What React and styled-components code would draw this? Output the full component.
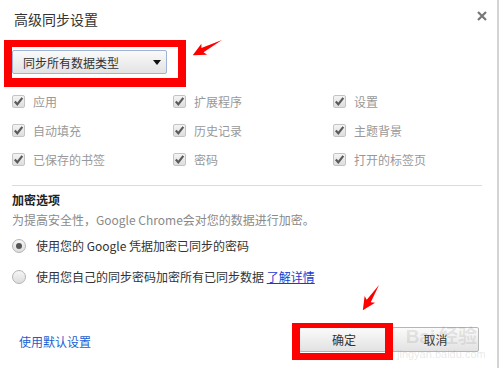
import React from "react";
import styled, { createGlobalStyle } from "styled-components";

const GlobalStyle = createGlobalStyle`
  html, body {
    margin: 0;
    padding: 0;
    background: #fff;
  }
  body {
    font-family: "Noto Sans CJK SC", "Noto Sans", "Liberation Sans", sans-serif;
    font-size: 12px;
    color: #333;
  }
`;

const syncItems = [
  ["应用", "扩展程序", "设置"],
  ["自动填充", "历史记录", "主题背景"],
  ["已保存的书签", "密码", "打开的标签页"],
];

const Dialog = () => (
  <Frame>
    <Header>
      <Title>高级同步设置</Title>
      <CloseButton aria-label="关闭">
        <svg width="10" height="10" viewBox="0 0 10 10">
          <path d="M1 1 L9 9 M9 1 L1 9" stroke="#777" strokeWidth="2.2" />
        </svg>
      </CloseButton>
    </Header>

    <Highlight>
      <Select>
        <span>同步所有数据类型</span>
        <Caret />
      </Select>
    </Highlight>

    <CheckGrid>
      {syncItems.flat().map((label) => (
        <CheckItem key={label}>
          <CheckBox>
            <svg width="11" height="11" viewBox="0 0 11 11">
              <path
                d="M1.8 5.6 L4.3 8.3 L9.3 1.8"
                fill="none"
                stroke="#5a5a5a"
                strokeWidth="2.2"
              />
            </svg>
          </CheckBox>
          <CheckLabel>{label}</CheckLabel>
        </CheckItem>
      ))}
    </CheckGrid>

    <Divider />

    <SectionTitle>加密选项</SectionTitle>
    <Description>
      为提高安全性，Google Chrome会对您的数据进行加密。
    </Description>

    <RadioRow>
      <Radio $checked />
      <span>使用您的 Google 凭据加密已同步的密码</span>
    </RadioRow>
    <RadioRow>
      <Radio />
      <span>
        使用您自己的同步密码加密所有已同步数据 <Link href="#">了解详情</Link>
      </span>
    </RadioRow>

    <Footer>
      <DefaultLink href="#">使用默认设置</DefaultLink>
      <Buttons>
        <Button $width={90}>确定</Button>
        <Button $width={87}>取消</Button>
      </Buttons>
    </Footer>

    <Watermark>
      <WatermarkLogo>Bai&#x2009;经验</WatermarkLogo>
      <WatermarkUrl>jingyan.baidu.com</WatermarkUrl>
    </Watermark>

    <ButtonHighlight />

    <Annotations width="499" height="368" viewBox="0 0 499 368">
      <Arrow x={222} y={40} length={33} angle={152.6} />
      <Arrow x={379} y={285} length={30} angle={122.6} />
    </Annotations>
  </Frame>
);

const Arrow = ({ x, y, length, angle }) => {
  const L = length;
  const points = `0,0 ${L - 11},-2.4 ${L - 13},-6.2 ${L},0 ${L - 13},6.2 ${L - 11},2.4`;
  return (
    <polygon
      points={points}
      fill="#ff0000"
      transform={`translate(${x} ${y}) rotate(${angle})`}
    />
  );
};

export default function App() {
  return (
    <>
      <GlobalStyle />
      <Dialog />
    </>
  );
}

const Frame = styled.div`
  position: relative;
  width: 497px;
  height: 368px;
  border-right: 2px solid #d4d4d4;
  display: flex;
  flex-direction: column;
  overflow: hidden;
`;

const Header = styled.div`
  display: flex;
  justify-content: space-between;
  align-items: center;
  padding: 10px 10px 0 14px;
  height: 18px;
`;

const Title = styled.div`
  font-size: 14px;
  line-height: 18px;
  color: #333;
`;

const CloseButton = styled.div`
  display: flex;
  align-items: center;
  margin-top: -6px;
`;

const Highlight = styled.div`
  align-self: flex-start;
  margin: 12px 0 0 4px;
  border: solid #ff0000;
  border-width: 7px 8px 9px 8px;
  padding: 3px 11px 4px 0;
`;

const Select = styled.div`
  box-sizing: border-box;
  width: 155px;
  height: 24px;
  display: flex;
  align-items: center;
  justify-content: space-between;
  padding: 0 5px 0 10px;
  border: 1px solid #9fb3d6;
  border-radius: 2px;
  background: linear-gradient(#fafafa, #e3e3e3);
  color: #333;
  font-size: 12px;
`;

const Caret = styled.span`
  width: 0;
  height: 0;
  border-left: 4px solid transparent;
  border-right: 4px solid transparent;
  border-top: 5px solid #111;
`;

const CheckGrid = styled.div`
  display: grid;
  grid-template-columns: 161px 160px 1fr;
  grid-auto-rows: 29px;
  padding-left: 12px;
`;

const CheckItem = styled.div`
  display: flex;
  align-items: center;
  gap: 8px;
`;

const CheckBox = styled.span`
  box-sizing: border-box;
  width: 13px;
  height: 13px;
  display: flex;
  align-items: center;
  justify-content: center;
  border: 1px solid #c4c4c4;
  border-radius: 2px;
  background: linear-gradient(#f4f4f4, #dedede);
`;

const CheckLabel = styled.span`
  color: #999;
  font-size: 12px;
  line-height: 16px;
`;

const Divider = styled.div`
  height: 1px;
  background: #dcdcdc;
  margin: 11px 15px 0 12px;
`;

const SectionTitle = styled.div`
  margin: 4px 0 0 12px;
  font-size: 12px;
  font-weight: bold;
  line-height: 20px;
  color: #222;
`;

const Description = styled.div`
  margin-left: 12px;
  line-height: 20px;
  color: #8a8a8a;
`;

const RadioRow = styled.div`
  display: flex;
  align-items: center;
  gap: 10px;
  height: 31px;
  padding-left: 12px;
  color: #333;
  &:first-of-type {
    margin-top: 1px;
  }
`;

const Radio = styled.span`
  box-sizing: border-box;
  width: 14px;
  height: 14px;
  border-radius: 50%;
  border: 1px solid #b4b4b4;
  background: linear-gradient(#f6f6f6, #dcdcdc);
  display: flex;
  align-items: center;
  justify-content: center;
  &::after {
    content: "";
    width: 6px;
    height: 6px;
    border-radius: 50%;
    background: ${(p) => (p.$checked ? "#555" : "transparent")};
  }
`;

const Link = styled.a`
  color: #1a3ccc;
  text-decoration: underline;
`;

const Footer = styled.div`
  display: flex;
  justify-content: space-between;
  align-items: center;
  margin-top: 35px;
  padding: 0 18px 0 19px;
`;

const DefaultLink = styled.a`
  color: #1a5fd0;
  text-decoration: none;
  padding-top: 3px;
`;

const Buttons = styled.div`
  display: flex;
  gap: 3px;
`;

const Button = styled.div`
  box-sizing: border-box;
  width: ${(p) => p.$width}px;
  height: 25px;
  display: flex;
  align-items: center;
  justify-content: center;
  border: 1px solid #b5b5b5;
  border-radius: 2px;
  background: linear-gradient(#fbfbfb, #e2e2e2);
  color: #333;
`;

const ButtonHighlight = styled.div`
  position: absolute;
  left: 292px;
  top: 323px;
  width: 101px;
  height: 37px;
  box-sizing: border-box;
  border: solid #ff0000;
  border-width: 5px 8px 7px 8px;
  pointer-events: none;
`;

const Watermark = styled.div`
  position: absolute;
  left: 397px;
  top: 326px;
  display: flex;
  flex-direction: column;
  align-items: center;
  pointer-events: none;
  color: rgba(120, 120, 120, 0.18);
`;

const WatermarkLogo = styled.div`
  font-family: "Liberation Sans", "Noto Sans CJK SC", sans-serif;
  font-size: 19px;
  font-weight: bold;
  line-height: 22px;
`;

const WatermarkUrl = styled.div`
  font-family: "Liberation Sans", sans-serif;
  font-size: 11px;
  line-height: 12px;
`;

const Annotations = styled.svg`
  position: absolute;
  left: 0;
  top: 0;
  pointer-events: none;
`;
